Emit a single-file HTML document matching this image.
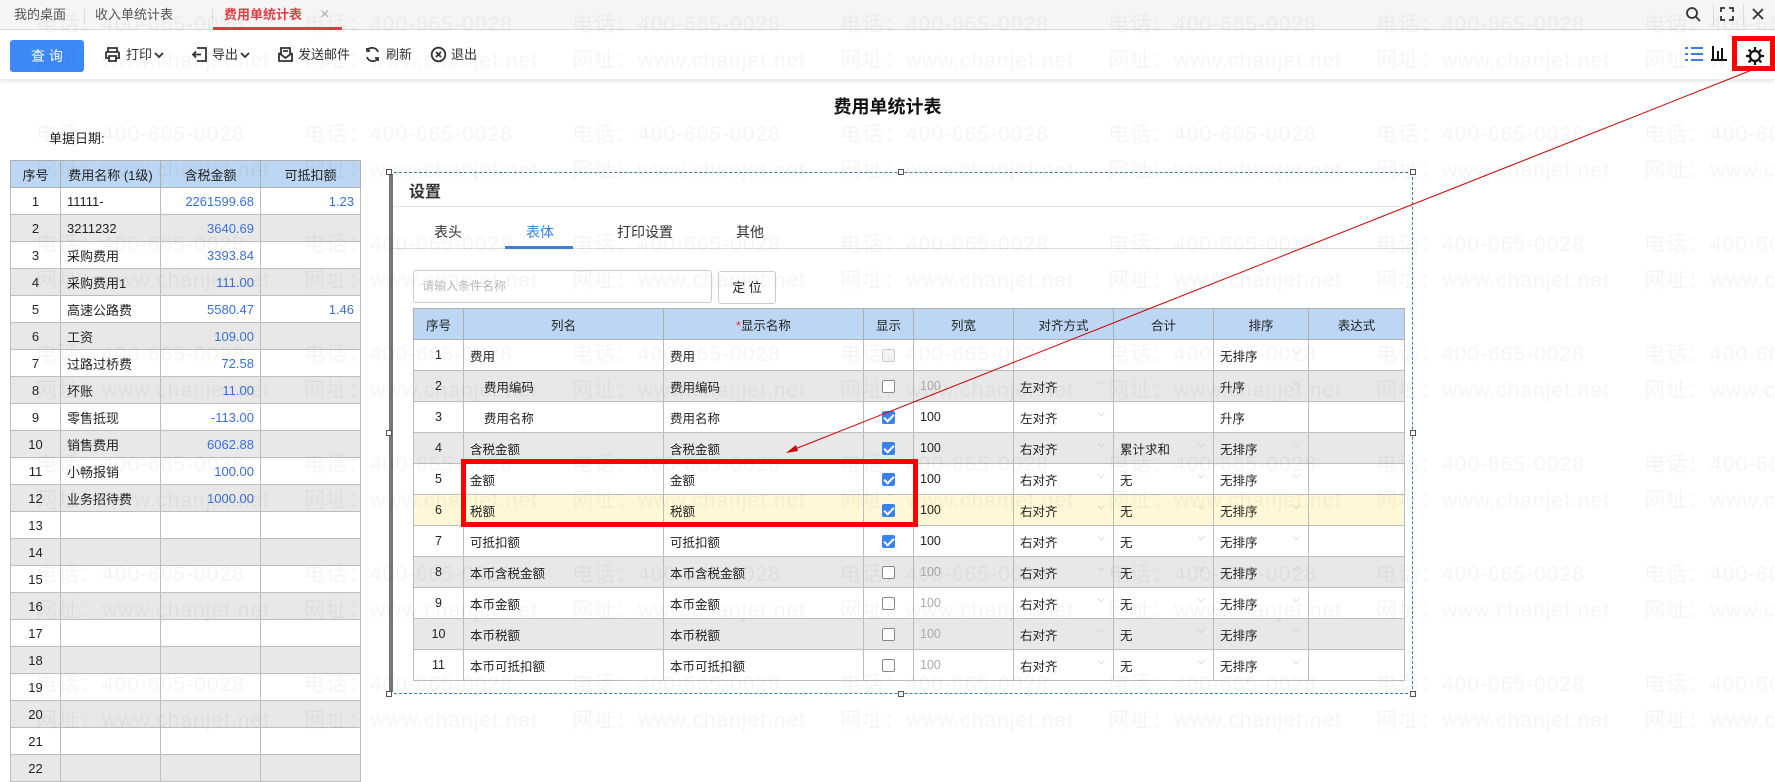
<!DOCTYPE html>
<html><head><meta charset="utf-8">
<style>
*{box-sizing:border-box;margin:0;padding:0}
body{width:1775px;height:757px;overflow:hidden;background:#fff;font-family:"Liberation Sans","Noto Sans CJK SC",sans-serif;font-size:13px;color:#222;position:relative}
.abs{position:absolute}
.tabbar{left:0;top:0;width:1775px;height:30px;background:#f5f5f5;border-bottom:1px solid #ddd}
.tb{top:0;height:30px;line-height:30px;font-size:13px;color:#555}
.toolbar{left:0;top:30px;width:1775px;height:49px;background:#fff;box-shadow:0 2px 4px rgba(0,0,0,.12)}
.btn{left:10px;top:40px;width:74px;height:32px;background:#3d8af7;border-radius:3px;color:#fff;text-align:center;line-height:32px;font-size:14px}
.ti{top:44px;height:22px;line-height:22px;font-size:13px;color:#333}
table{border-collapse:collapse;table-layout:fixed;position:absolute}
td{border:1px solid #bdbdbd;height:27px;padding:0 6px;white-space:nowrap;overflow:hidden}
.lt th{background:#bcd6f3;border:1px solid #b0b0b0;font-weight:normal;height:27px;font-size:13px}
.g td{background:#e8e8e8}
.n{text-align:right;color:#3b6fd8}
.c{text-align:center}
.dt td{height:31px;font-size:12.5px}
.dt th{background:#bcd6f3;border:1px solid #b0b0b0;font-weight:normal;height:31px;font-size:12.5px}
.y td{background:#fff8d6}
.cb{display:inline-block;width:13px;height:13px;border:1px solid #888;border-radius:2px;vertical-align:middle;background:#fff}
.ck{background:#3b82f0;border-color:#3b82f0;position:relative}
.ck:after{content:"";position:absolute;left:3px;top:0px;width:4px;height:8px;border:solid #fff;border-width:0 2px 2px 0;transform:rotate(45deg)}
.dis{border-color:#ccc;background:#f3f3f3}
.gr{color:#aaa}
.sel{position:relative}
.sel:after{content:"⌵";position:absolute;right:8px;top:6px;color:#bbb;font-size:10px}
.wm{color:rgba(0,0,0,.04);font-size:21px;white-space:nowrap;pointer-events:none;letter-spacing:1px}
.h{width:6px;height:6px;border:1px solid #555;background:#fff;position:absolute}
</style></head><body>
<div class="abs tabbar"></div>
<div class="abs tb" style="left:14px">我的桌面</div>
<div class="abs" style="left:84px;top:8px;width:1px;height:16px;background:#ddd"></div>
<div class="abs tb" style="left:95px">收入单统计表</div>
<div class="abs" style="left:212px;top:8px;width:1px;height:16px;background:#ddd"></div>
<div class="abs tb" style="left:224px;color:#e03e45;font-weight:bold">费用单统计表</div>
<div class="abs tb" style="left:320px;color:#aaa;font-size:16px">×</div>
<div class="abs" style="left:213px;top:27px;width:129px;height:3px;background:#e03e45"></div>
<svg class="abs" style="left:1684px;top:5px" width="20" height="20" viewBox="0 0 20 20"><circle cx="8" cy="8" r="5" fill="none" stroke="#333" stroke-width="1.8"/><line x1="12" y1="12" x2="16" y2="16" stroke="#333" stroke-width="1.8"/></svg>
<div class="abs" style="left:1713px;top:4px;width:1px;height:22px;background:#ddd"></div>
<svg class="abs" style="left:1719px;top:6px" width="16" height="16" viewBox="0 0 16 16" fill="none" stroke="#333" stroke-width="1.8"><path d="M2 6V2h4M10 2h4v4M14 10v4h-4M6 14H2v-4"/></svg>
<div class="abs" style="left:1743px;top:4px;width:1px;height:22px;background:#ddd"></div>
<svg class="abs" style="left:1750px;top:6px" width="16" height="16" viewBox="0 0 16 16" stroke="#333" stroke-width="1.8"><path d="M3 3l10 10M13 3L3 13"/></svg>

<div class="abs toolbar"></div>
<div class="abs btn">查 询</div>
<svg class="abs" style="left:104px;top:46px" width="17" height="17" viewBox="0 0 17 17" fill="none" stroke="#333" stroke-width="1.8"><path d="M4 6V2h9v4M3 6h11a1 1 0 0 1 1 1v5h-3M5 12H2V7a1 1 0 0 1 1-1M5 10h7v5H5z"/></svg>
<div class="abs ti" style="left:126px">打印</div>
<svg class="abs" style="left:154px;top:51px" width="10" height="8" viewBox="0 0 10 8" fill="none" stroke="#333" stroke-width="1.8"><path d="M1 2l4 4 4-4"/></svg>
<svg class="abs" style="left:191px;top:46px" width="17" height="17" viewBox="0 0 17 17" fill="none" stroke="#333" stroke-width="1.8"><path d="M6 2h9v13H6M10 8.5H2M5 5.5l-3 3 3 3"/></svg>
<div class="abs ti" style="left:212px">导出</div>
<svg class="abs" style="left:240px;top:51px" width="10" height="8" viewBox="0 0 10 8" fill="none" stroke="#333" stroke-width="1.8"><path d="M1 2l4 4 4-4"/></svg>
<svg class="abs" style="left:277px;top:46px" width="17" height="17" viewBox="0 0 17 17" fill="none" stroke="#333" stroke-width="1.8"><path d="M2 7v8h13V7M2 7l6.5 5L15 7M4 9V2h9v7M6 5h5"/></svg>
<div class="abs ti" style="left:298px">发送邮件</div>
<svg class="abs" style="left:364px;top:46px" width="17" height="17" viewBox="0 0 17 17" fill="none" stroke="#333" stroke-width="1.8"><path d="M14 6A6 6 0 0 0 3 5M3 11a6 6 0 0 0 11 1M3 2v3h3M14 15v-3h-3"/></svg>
<div class="abs ti" style="left:386px">刷新</div>
<svg class="abs" style="left:430px;top:46px" width="17" height="17" viewBox="0 0 17 17" fill="none" stroke="#333" stroke-width="1.8"><circle cx="8.5" cy="8.5" r="6.8"/><path d="M6 6l5 5M11 6l-5 5"/></svg>
<div class="abs ti" style="left:451px">退出</div>

<svg class="abs" style="left:1684px;top:45px" width="20" height="18" viewBox="0 0 20 18" fill="#3b7fe0"><rect x="1" y="2" width="3" height="2"/><rect x="7" y="2" width="12" height="2"/><rect x="1" y="8" width="3" height="2"/><rect x="7" y="8" width="12" height="2"/><rect x="1" y="14" width="3" height="2"/><rect x="7" y="14" width="12" height="2"/></svg>
<svg class="abs" style="left:1710px;top:44px" width="18" height="18" viewBox="0 0 18 18" fill="#111"><rect x="2" y="2" width="2" height="13"/><rect x="7" y="7" width="2" height="8"/><rect x="11" y="4" width="2" height="11"/><rect x="1" y="15" width="16" height="2"/></svg>
<svg class="abs" style="left:1744px;top:45px" width="22" height="22" viewBox="0 0 22 22" fill="none" stroke="#111" stroke-width="2.2"><circle cx="11" cy="11" r="5"/><path d="M11 2v3M11 17v3M2 11h3M17 11h3M4.6 4.6l2.1 2.1M15.3 15.3l2.1 2.1M4.6 17.4l2.1-2.1M15.3 6.7l2.1-2.1"/></svg>
<div class="abs" style="left:1732px;top:36px;width:43px;height:35px;border:5px solid #f00"></div>

<div class="abs" style="left:0;top:93px;width:1775px;text-align:center;font-size:18px;font-weight:bold;color:#111">费用单统计表</div>
<div class="abs" style="left:49px;top:128px;font-size:13px">单据日期:</div>

<table class="lt" style="left:10px;top:160px;width:350px">
<colgroup><col style="width:50px"><col style="width:100px"><col style="width:100px"><col style="width:100px"></colgroup>
<tr><th>序号</th><th>费用名称 (1级)</th><th>含税金额</th><th>可抵扣额</th></tr>
<tr><td class="c">1</td><td>11111-</td><td class="n">2261599.68</td><td class="n">1.23</td></tr>
<tr class="g"><td class="c">2</td><td>3211232</td><td class="n">3640.69</td><td></td></tr>
<tr><td class="c">3</td><td>采购费用</td><td class="n">3393.84</td><td></td></tr>
<tr class="g"><td class="c">4</td><td>采购费用1</td><td class="n">111.00</td><td></td></tr>
<tr><td class="c">5</td><td>高速公路费</td><td class="n">5580.47</td><td class="n">1.46</td></tr>
<tr class="g"><td class="c">6</td><td>工资</td><td class="n">109.00</td><td></td></tr>
<tr><td class="c">7</td><td>过路过桥费</td><td class="n">72.58</td><td></td></tr>
<tr class="g"><td class="c">8</td><td>坏账</td><td class="n">11.00</td><td></td></tr>
<tr><td class="c">9</td><td>零售抵现</td><td class="n">-113.00</td><td></td></tr>
<tr class="g"><td class="c">10</td><td>销售费用</td><td class="n">6062.88</td><td></td></tr>
<tr><td class="c">11</td><td>小畅报销</td><td class="n">100.00</td><td></td></tr>
<tr class="g"><td class="c">12</td><td>业务招待费</td><td class="n">1000.00</td><td></td></tr>
<tr><td class="c">13</td><td></td><td></td><td></td></tr>
<tr class="g"><td class="c">14</td><td></td><td></td><td></td></tr>
<tr><td class="c">15</td><td></td><td></td><td></td></tr>
<tr class="g"><td class="c">16</td><td></td><td></td><td></td></tr>
<tr><td class="c">17</td><td></td><td></td><td></td></tr>
<tr class="g"><td class="c">18</td><td></td><td></td><td></td></tr>
<tr><td class="c">19</td><td></td><td></td><td></td></tr>
<tr class="g"><td class="c">20</td><td></td><td></td><td></td></tr>
<tr><td class="c">21</td><td></td><td></td><td></td></tr>
<tr class="g"><td class="c">22</td><td></td><td></td><td></td></tr>
</table>

<div class="abs" style="left:389px;top:172px;width:1024px;height:522px;background:#fff;border:1px dashed #3a7bb5"></div>
<div class="abs" style="left:389px;top:174px;width:4px;height:518px;background:#777"></div>
<div class="h" style="left:386px;top:169px"></div><div class="h" style="left:898px;top:169px"></div><div class="h" style="left:1410px;top:169px"></div>
<div class="h" style="left:386px;top:430px"></div><div class="h" style="left:1410px;top:430px"></div>
<div class="h" style="left:386px;top:691px"></div><div class="h" style="left:898px;top:691px"></div><div class="h" style="left:1410px;top:691px"></div>
<div class="abs" style="left:409px;top:178px;font-size:16px;font-weight:bold;color:#333">设置</div>
<div class="abs" style="left:393px;top:206px;width:1019px;height:1px;background:#e5e5e5"></div>
<div class="abs" style="left:434px;top:222px;font-size:14px;color:#333">表头</div>
<div class="abs" style="left:526px;top:222px;font-size:14px;color:#3b7fe0">表体</div>
<div class="abs" style="left:617px;top:222px;font-size:14px;color:#333">打印设置</div>
<div class="abs" style="left:736px;top:222px;font-size:14px;color:#333">其他</div>
<div class="abs" style="left:393px;top:248px;width:1019px;height:1px;background:#ddd"></div>
<div class="abs" style="left:505px;top:246px;width:68px;height:3px;background:#3b7fe0"></div>
<div class="abs" style="left:413px;top:270px;width:299px;height:33px;border:1px solid #ccc;border-radius:3px;color:#bbb;font-size:12px;line-height:31px;padding-left:8px">请输入条件名称</div>
<div class="abs" style="left:718px;top:271px;width:58px;height:33px;border:1px solid #ccc;border-radius:3px;text-align:center;line-height:31px;font-size:13px">定 位</div>

<table class="dt" style="left:413px;top:308px;width:991px">
<colgroup><col style="width:50px"><col style="width:200px"><col style="width:200px"><col style="width:50px"><col style="width:100px"><col style="width:100px"><col style="width:100px"><col style="width:95px"><col style="width:96px"></colgroup>
<tr><th>序号</th><th>列名</th><th><span style="color:#e33">*</span>显示名称</th><th>显示</th><th>列宽</th><th>对齐方式</th><th>合计</th><th>排序</th><th>表达式</th></tr>
<tr><td class="c">1</td><td>费用</td><td>费用</td><td class="c"><span class="cb dis"></span></td><td></td><td></td><td></td><td class="sel">无排序</td><td></td></tr>
<tr class="g"><td class="c">2</td><td>&nbsp;&nbsp;&nbsp;&nbsp;费用编码</td><td>费用编码</td><td class="c"><span class="cb"></span></td><td class="gr">100</td><td class="sel">左对齐</td><td></td><td class="sel">升序</td><td></td></tr>
<tr><td class="c">3</td><td>&nbsp;&nbsp;&nbsp;&nbsp;费用名称</td><td>费用名称</td><td class="c"><span class="cb ck"></span></td><td>100</td><td class="sel">左对齐</td><td></td><td>升序</td><td></td></tr>
<tr class="g"><td class="c">4</td><td>含税金额</td><td>含税金额</td><td class="c"><span class="cb ck"></span></td><td>100</td><td class="sel">右对齐</td><td class="sel">累计求和</td><td class="sel">无排序</td><td></td></tr>
<tr><td class="c">5</td><td>金额</td><td>金额</td><td class="c"><span class="cb ck"></span></td><td>100</td><td class="sel">右对齐</td><td class="sel">无</td><td class="sel">无排序</td><td></td></tr>
<tr class="y"><td class="c">6</td><td>税额</td><td>税额</td><td class="c"><span class="cb ck"></span></td><td>100</td><td class="sel">右对齐</td><td class="sel">无</td><td class="sel">无排序</td><td></td></tr>
<tr><td class="c">7</td><td>可抵扣额</td><td>可抵扣额</td><td class="c"><span class="cb ck"></span></td><td>100</td><td class="sel">右对齐</td><td class="sel">无</td><td class="sel">无排序</td><td></td></tr>
<tr class="g"><td class="c">8</td><td>本币含税金额</td><td>本币含税金额</td><td class="c"><span class="cb"></span></td><td class="gr">100</td><td class="sel">右对齐</td><td class="sel">无</td><td class="sel">无排序</td><td></td></tr>
<tr><td class="c">9</td><td>本币金额</td><td>本币金额</td><td class="c"><span class="cb"></span></td><td class="gr">100</td><td class="sel">右对齐</td><td class="sel">无</td><td class="sel">无排序</td><td></td></tr>
<tr class="g"><td class="c">10</td><td>本币税额</td><td>本币税额</td><td class="c"><span class="cb"></span></td><td class="gr">100</td><td class="sel">右对齐</td><td class="sel">无</td><td class="sel">无排序</td><td></td></tr>
<tr><td class="c">11</td><td>本币可抵扣额</td><td>本币可抵扣额</td><td class="c"><span class="cb"></span></td><td class="gr">100</td><td class="sel">右对齐</td><td class="sel">无</td><td class="sel">无排序</td><td></td></tr>
</table>

<div class="abs" style="left:461px;top:459px;width:457px;height:68px;border:5px solid #f00"></div>

<svg class="abs" style="left:0;top:0" width="1775" height="757"><line x1="1752" y1="70" x2="790" y2="451" stroke="#c00" stroke-width="1"/><path d="M786 453l10-8 2 6z" fill="#c00"/></svg>

<div id="wm"></div>
<script>
var h='';for(var r=0;r<7;r++){for(var c=0;c<7;c++){var x=36+c*268,y=8+r*110;h+='<div class="abs wm" style="left:'+x+'px;top:'+y+'px">电话：400-665-0028</div><div class="abs wm" style="left:'+x+'px;top:'+(y+36)+'px">网址：www.chanjet.net</div>';}}document.getElementById('wm').innerHTML=h;
</script>
</body></html>
